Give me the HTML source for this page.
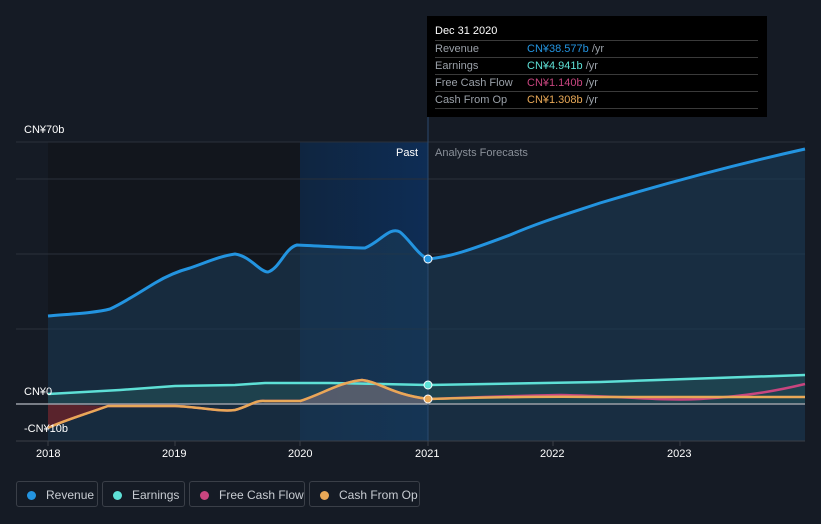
<!DOCTYPE html><html><head><meta charset="utf-8"><style>
body{margin:0;width:821px;height:524px;background:#151b25;font-family:"Liberation Sans",sans-serif;overflow:hidden;position:relative}
.t{position:absolute;color:#fff;font-size:11px}
.leg{position:absolute;top:481px;height:26px;border:1px solid #3a3f48;border-radius:3px;color:#c8ccd2;font-size:12px;line-height:26px;box-sizing:border-box}
.leg i{display:inline-block;width:9px;height:9px;border-radius:50%;margin:0 10px 0 10px;vertical-align:-1px}
.tip{position:absolute;left:427px;top:16px;width:340px;height:101px;background:#000}
.r{position:absolute;left:8px;width:323px;border-top:1px solid #3a3a3a;font-size:11px;color:#9aa0a8;height:17px;line-height:16px}
.r span{position:absolute;left:92px}
</style></head><body>
<svg width="821" height="524" style="position:absolute;left:0;top:0">
<defs><linearGradient id="hb" x1="0" x2="1"><stop offset="0" stop-color="#0f2540"/><stop offset="1" stop-color="#0e2d55"/></linearGradient></defs>
<rect x="48" y="142" width="252" height="299" fill="#12161d"/>
<rect x="300" y="142" width="128" height="299" fill="url(#hb)"/>
<g stroke="#2a303a" stroke-width="1"><line x1="16" y1="142" x2="805" y2="142"/><line x1="16" y1="179" x2="805" y2="179"/><line x1="16" y1="254" x2="805" y2="254"/><line x1="16" y1="329" x2="805" y2="329"/></g>
<path d="M48,316 C70,314 95,313 110,309 C125,302 140,292 155,283 C165,277 175,272 190,268 C205,263 220,256 235,254 C250,256 260,272 268,272 C280,268 285,248 297,245 C320,246 350,248 365,248 C380,242 390,226 400,232 C410,240 418,255 428,259 C450,257 470,250 510,235 C540,222 570,213 600,203 C650,188 720,168 805,149 L805,441 L48,441Z" fill="#1b3a55" opacity="0.6"/>
<path d="M48,316 C70,314 95,313 110,309 C125,302 140,292 155,283 C165,277 175,272 190,268 C205,263 220,256 235,254 C250,256 260,272 268,272 C280,268 285,248 297,245 C320,246 350,248 365,248 C380,242 390,226 400,232 C410,240 418,255 428,259 C450,257 470,250 510,235 C540,222 570,213 600,203 C650,188 720,168 805,149" fill="none" stroke="#2394e0" stroke-width="3"/>
<path d="M48,394 L120,390 L175,386 L235,385 L265,383 L330,383 L428,385 L600,382 L805,375 L805,404 L48,404Z" fill="#2a6b6a" opacity="0.35"/>
<path d="M48,428 L80,417 L108,406 L48,404Z" fill="#6a2228" opacity="0.8"/>
<path d="M300,401 C320,395 340,382 362,380 C380,382 390,394 428,399 L428,404 L300,404Z" fill="#7a6a78" opacity="0.6"/>
<line x1="16" y1="404" x2="805" y2="404" stroke="#9a9ea6" stroke-width="1.5"/>
<line x1="16" y1="441" x2="805" y2="441" stroke="#3a3f48"/>
<line x1="428" y1="20" x2="428" y2="441" stroke="#2a4a6e"/>
<path d="M48,394 L120,390 L175,386 L235,385 L265,383 L330,383 L428,385 L600,382 L805,375" fill="none" stroke="#5ee0d6" stroke-width="2.5"/>
<path d="M48,428 C60,422 80,416 108,406 L175,406 C200,407 220,412 235,410 C250,406 255,400 265,401 L300,401 C320,395 340,382 362,380 C380,382 390,394 428,399 C460,398 500,396 560,395 C620,396 660,401 700,399 C750,396 780,390 805,384" fill="none" stroke="#c8457f" stroke-width="2.5"/>
<path d="M48,428 C60,422 80,416 108,406 L175,406 C200,407 220,412 235,410 C250,406 255,400 265,401 L300,401 C320,395 340,382 362,380 C380,382 390,394 428,399 C470,398 520,396 600,397 L805,397" fill="none" stroke="#e8a857" stroke-width="2.5"/>
<circle cx="428" cy="259" r="4" fill="#2394e0" stroke="#fff" stroke-width="1"/>
<circle cx="428" cy="385" r="4" fill="#5ee0d6" stroke="#fff" stroke-width="1"/>
<circle cx="428" cy="399" r="4" fill="#e8a857" stroke="#fff" stroke-width="1"/>
<g stroke="#3a3f48"><line x1="48" y1="441" x2="48" y2="446"/><line x1="175" y1="441" x2="175" y2="446"/><line x1="300" y1="441" x2="300" y2="446"/><line x1="428" y1="441" x2="428" y2="446"/><line x1="553" y1="441" x2="553" y2="446"/><line x1="680" y1="441" x2="680" y2="446"/></g>
</svg>
<div class="t" style="left:24px;top:124px">CN¥70b</div>
<div class="t" style="left:24px;top:386px">CN¥0</div>
<div class="t" style="left:24px;top:423px">-CN¥10b</div>
<div class="t" style="left:396px;top:147px">Past</div>
<div class="t" style="left:435px;top:147px;color:#8a9099">Analysts Forecasts</div>
<div class="t" style="left:36px;top:448px">2018</div>
<div class="t" style="left:162px;top:448px">2019</div>
<div class="t" style="left:288px;top:448px">2020</div>
<div class="t" style="left:415px;top:448px">2021</div>
<div class="t" style="left:540px;top:448px">2022</div>
<div class="t" style="left:667px;top:448px">2023</div>
<div class="tip">
<div style="position:absolute;left:8px;top:9px;color:#fff;font-size:11px">Dec 31 2020</div>
<div class="r" style="top:24px">Revenue<span><b style="font-weight:normal;color:#2394e0">CN¥38.577b</b> /yr</span></div>
<div class="r" style="top:41px">Earnings<span><b style="font-weight:normal;color:#5ee0d6">CN¥4.941b</b> /yr</span></div>
<div class="r" style="top:58px">Free Cash Flow<span><b style="font-weight:normal;color:#c8457f">CN¥1.140b</b> /yr</span></div>
<div class="r" style="top:75px;height:16px;border-bottom:1px solid #3a3a3a">Cash From Op<span><b style="font-weight:normal;color:#e8a857">CN¥1.308b</b> /yr</span></div>
</div>
<div class="leg" style="left:16px;width:82px"><i style="background:#2394e0"></i>Revenue</div>
<div class="leg" style="left:102px;width:83px"><i style="background:#5ee0d6"></i>Earnings</div>
<div class="leg" style="left:189px;width:116px"><i style="background:#c8457f"></i>Free Cash Flow</div>
<div class="leg" style="left:309px;width:111px"><i style="background:#e8a857"></i>Cash From Op</div>
</body></html>
